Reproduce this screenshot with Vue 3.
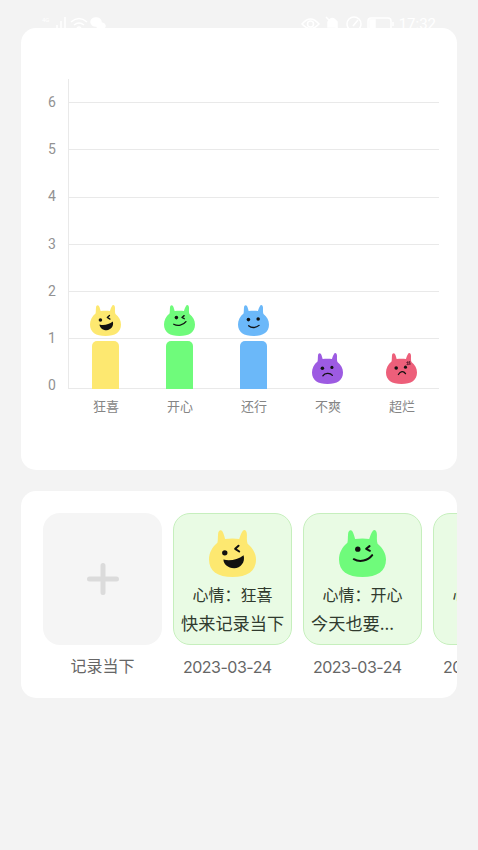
<script setup>
const levels = [6, 5, 4, 3, 2, 1, 0]

const moods = {
  joy: { label: '狂喜', color: '#fde870' },
  happy: { label: '开心', color: '#6ffb7b' },
  fine: { label: '还行', color: '#6bb8f9' },
  upset: { label: '不爽', color: '#9d5be2' },
  awful: { label: '超烂', color: '#ed5f7a' },
}

const bars = [
  { mood: 'joy', count: 1 },
  { mood: 'happy', count: 1 },
  { mood: 'fine', count: 1 },
  { mood: 'upset', count: 0 },
  { mood: 'awful', count: 0 },
]

const records = [
  { mood: 'joy', note: '快来记录当下', date: '2023-03-24' },
  { mood: 'happy', note: '今天也要...', date: '2023-03-24' },
  { mood: 'fine', note: '', date: '2023-03-24' },
]

const line = (d) => `<path d="${d}" fill="none" stroke="#111" stroke-width="6" stroke-linecap="round" stroke-linejoin="round"/>`
const faces = {
  joy: '<circle cx="47" cy="68" r="8"/>' + line('M88 47L78 56L90 64') + '<path d="M43 88C62 94 86 88 103 75C109 96 94 113 75 114C56 114 43 101 43 88Z"/>',
  happy: '<circle cx="56" cy="57" r="8"/>' + line('M91 48L81 56L92 62') + line('M44 87C62 97 86 92 99 75'),
  fine: '<circle cx="47" cy="66" r="8"/><circle cx="91" cy="63" r="8"/>' + line('M48 94C62 106 83 103 95 92'),
  upset: '<circle cx="47" cy="69" r="8"/><circle cx="90" cy="65" r="7"/>' + line('M49 103C58 90 81 88 92 101'),
  awful: '<circle cx="46" cy="68" r="8"/><circle cx="88" cy="64" r="7"/>' + line('M56 97C65 82 79 80 88 93') + '<path d="M97 38L99 55M106 37L108 53M92 43L110 40M93 52L111 49" stroke="#641e30" stroke-width="4"/>',
}
const body = 'M25 38C27 30 26 22 27 12C28-1 37-2 41 6C45 14 46 20 48 27C62 25 78 25 90 27C93 18 96 8 101 2C107-3 113 4 113 14C113 25 112 33 115 41C131 54 140 71 140 88C140 123 114 140 70 140C26 140 0 123 0 88C0 69 9 51 25 38Z'
</script>

<template>
  <main class="screen">
    <header class="status">
      <div class="group">
        <span class="net">4G</span>
        <svg width="18" height="16" viewBox="0 0 18 16"><path d="M2 12v3M6 9v6M10 5v10M14 1v14" /></svg>
        <svg class="wifi" width="18" height="16" viewBox="0 0 18 16"><path d="M1 6Q9-1 17 6M4 9Q9 5 14 9M7 12Q9 10 11 12" /></svg>
        <svg class="chat" width="17" height="16" viewBox="0 0 17 16"><ellipse cx="6" cy="6" rx="5" ry="4" /><ellipse cx="11" cy="10" rx="4" ry="3" /></svg>
      </div>
      <div class="group right">
        <svg width="19" height="16" viewBox="0 0 19 16"><path d="M1 8Q9.500-2 18 8Q9.500 17 1 8Z" /><circle cx="9.500" cy="8" r="3" /></svg>
        <svg width="17" height="16" viewBox="0 0 17 16"><path class="solid" d="M4 11V6Q8-1 13 6v5Z" /><path d="M2 1L15 14" /></svg>
        <svg width="18" height="16" viewBox="0 0 18 16"><circle cx="9" cy="8" r="7" /><path d="M8 10L13 4" /></svg>
        <svg width="28" height="16" viewBox="0 0 28 16"><rect x="1" y="2" width="23" height="12" rx="3" /><path class="solid" d="M3 4h5v9H3Z" /><path d="M26 6v4" /></svg>
        <span class="time">17:32</span>
      </div>
    </header>

    <section class="card chart">
      <div class="scale">
        <span v-for="n in levels" :key="n">{{ n }}</span>
      </div>
      <div class="plot">
        <div class="lines"><i v-for="n in 6" :key="n"></i></div>
        <div class="columns">
          <div v-for="bar in bars" :key="bar.mood" class="column">
            <svg class="monster" viewBox="0 0 140 140">
              <path :d="body" :fill="moods[bar.mood].color" />
              <g fill="#111" v-html="faces[bar.mood]"></g>
            </svg>
            <div class="bar" :style="{ height: bar.count * 48 + 'px', background: moods[bar.mood].color }"></div>
          </div>
        </div>
        <div class="names">
          <span v-for="bar in bars" :key="bar.mood">{{ moods[bar.mood].label }}</span>
        </div>
      </div>
    </section>

    <section class="card records">
      <article class="record">
        <div class="tile add">
          <svg width="32" height="32" viewBox="0 0 32 32"><path d="M16 2.500v27M2.500 16h27" /></svg>
        </div>
        <p class="caption">记录当下</p>
      </article>
      <article v-for="(r, i) in records" :key="i" class="record">
        <div class="tile mood">
          <svg class="monster" viewBox="0 0 140 140">
            <path :d="body" :fill="moods[r.mood].color" />
            <g fill="#111" v-html="faces[r.mood]"></g>
          </svg>
          <p class="feeling">心情：{{ moods[r.mood].label }}</p>
          <p class="note">{{ r.note }}</p>
        </div>
        <p class="caption date">{{ r.date }}</p>
      </article>
    </section>
  </main>
</template>

<style>
body {
  background: #f3f3f3;
}
</style>

<style scoped>
.screen {
  height: 850px;
  overflow: hidden;
  background: #f3f3f3;
  font-family: "Noto Sans CJK SC", sans-serif;
}
p {
  margin: 0;
}
.status {
  height: 28px;
  box-sizing: border-box;
  padding: 16px 42px 0;
  display: flex;
  justify-content: space-between;
  overflow: hidden;
  color: #fff;
}
.group {
  display: flex;
  height: 16px;
}
.group svg {
  flex: none;
  fill: none;
  stroke: #fff;
  stroke-width: 1.5;
}
.group .solid,
.group .chat {
  fill: #fff;
}
.wifi {
  margin: 0 2px 0 1px;
}
.net {
  width: 9px;
  font: 6px/8px Roboto, sans-serif;
}
.right {
  gap: 4px;
}
.time {
  font: 15px/17px Roboto, sans-serif;
}
.card {
  width: 436px;
  box-sizing: border-box;
  margin-left: 21px;
  border-radius: 15px;
  background: #fff;
}
.chart {
  height: 442px;
  padding: 51px 18px 0 27px;
  display: flex;
}
.scale {
  width: 20px;
  display: flex;
  flex-direction: column;
  font: 14px/46.5px Roboto, sans-serif;
  color: #929292;
}
.scale span {
  height: 47.2px;
}
.plot {
  flex: 1;
  display: grid;
  grid-template-rows: 310px 36px;
  align-content: start;
}
.lines,
.columns {
  grid-area: 1 / 1;
}
.lines {
  box-sizing: border-box;
  padding-top: 23px;
  border-left: 1px solid #e9e9e9;
  border-bottom: 1px solid #e9e9e9;
  display: flex;
  flex-direction: column;
}
.lines i {
  height: 47.3px;
  box-sizing: border-box;
  border-top: 1px solid #e9e9e9;
}
.columns,
.names {
  display: grid;
  grid-template-columns: repeat(5, 74px);
  padding-left: 0.500px;
}
.column {
  display: flex;
  flex-direction: column;
  align-items: center;
  justify-content: flex-end;
}
.monster {
  flex: none;
  width: 31px;
  height: 31px;
  margin-bottom: 5.500px;
}
.bar {
  width: 27px;
  border-radius: 5px 5px 0 0;
}
.names {
  grid-row: 2;
  padding-left: 1px;
  font-size: 13px;
  line-height: 33px;
  color: #858585;
  text-align: center;
}
.records {
  height: 207px;
  margin-top: 21px;
  padding: 22px 0 0 22px;
  display: flex;
  gap: 11px;
  overflow: hidden;
}
.record {
  flex: 0 0 119px;
}
.tile {
  height: 132px;
  box-sizing: border-box;
  border-radius: 17px;
}
.add {
  display: flex;
  align-items: center;
  justify-content: center;
  background: #f5f5f5;
}
.add path {
  stroke: #dbdbdb;
  stroke-width: 5;
  stroke-linecap: round;
}
.mood {
  border: 1px solid #c6efbd;
  background: #e9fbe4;
  display: flex;
  flex-direction: column;
  align-items: center;
  padding-top: 16px;
}
.mood .monster {
  width: 47px;
  height: 47px;
  margin: 0 0 4px;
}
.feeling {
  font-size: 16px;
  line-height: 26px;
  color: #303a2e;
  white-space: nowrap;
}
.note {
  width: 103px;
  font-size: 17.200px;
  line-height: 31px;
  color: #303a2e;
  white-space: nowrap;
}
.caption {
  font-size: 16px;
  line-height: 41px;
  color: #666;
  text-align: center;
}
.date {
  font-family: Inter, sans-serif;
  font-size: 16px;
  line-height: 44px;
  letter-spacing: -0.5px;
  text-align: left;
  padding-left: 10px;
}
</style>
